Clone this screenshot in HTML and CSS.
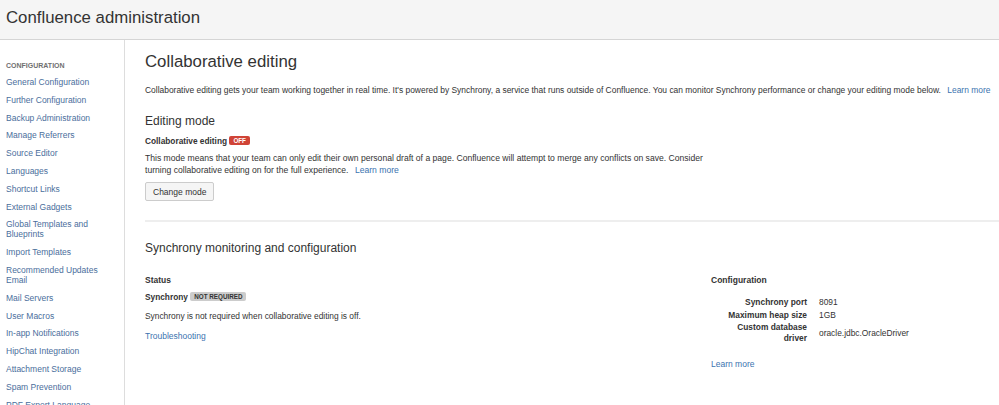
FILE: index.html
```html
<!DOCTYPE html>
<html lang="en">
<head>
  <meta charset="UTF-8">
  <meta name="viewport" content="width=device-width, initial-scale=1.0">
  <title>Confluence administration</title>
  <link rel="stylesheet" href="styles.css">
</head>
<body>
  <!-- Page header -->
  <header class="page-header">
    <h1>Confluence administration</h1>
  </header>

  <div class="layout">
    <!-- Admin sidebar -->
    <nav class="sidebar">
      <div class="nav-heading">Configuration</div>
      <ul class="nav-list">
        <li><a href="#">General Configuration</a></li>
        <li><a href="#">Further Configuration</a></li>
        <li><a href="#">Backup Administration</a></li>
        <li><a href="#">Manage Referrers</a></li>
        <li><a href="#">Source Editor</a></li>
        <li><a href="#">Languages</a></li>
        <li><a href="#">Shortcut Links</a></li>
        <li><a href="#">External Gadgets</a></li>
        <li><a href="#">Global Templates and Blueprints</a></li>
        <li><a href="#">Import Templates</a></li>
        <li><a href="#">Recommended Updates Email</a></li>
        <li><a href="#">Mail Servers</a></li>
        <li><a href="#">User Macros</a></li>
        <li><a href="#">In-app Notifications</a></li>
        <li><a href="#">HipChat Integration</a></li>
        <li><a href="#">Attachment Storage</a></li>
        <li><a href="#">Spam Prevention</a></li>
        <li><a href="#">PDF Export Language Support</a></li>
      </ul>
    </nav>

    <!-- Main content -->
    <main class="content">
      <h2 class="page-title">Collaborative editing</h2>
      <p class="intro">Collaborative editing gets your team working together in real time. It's powered by Synchrony, a service that runs outside of Confluence. You can monitor Synchrony performance or change your editing mode below. <a href="#" class="more">Learn more</a></p>

      <section class="editing-mode">
        <h3>Editing mode</h3>
        <div class="label-row"><strong>Collaborative editing</strong> <span class="lozenge off">Off</span></div>
        <p class="desc">This mode means that your team can only edit their own personal draft of a page. Confluence will attempt to merge any conflicts on save. Consider turning collaborative editing on for the full experience. <a href="#" class="more">Learn more</a></p>
        <button class="btn">Change mode</button>
      </section>

      <section class="synchrony">
        <h3>Synchrony monitoring and configuration</h3>
        <div class="columns">
          <div class="status">
            <h4>Status</h4>
            <div class="label-row"><strong>Synchrony</strong> <span class="lozenge grey">Not required</span></div>
            <p>Synchrony is not required when collaborative editing is off.</p>
            <a href="#">Troubleshooting</a>
          </div>
          <div class="config">
            <h4>Configuration</h4>
            <table class="config-table">
              <tr><th>Synchrony port</th><td>8091</td></tr>
              <tr><th>Maximum heap size</th><td>1GB</td></tr>
              <tr><th>Custom database driver</th><td>oracle.jdbc.OracleDriver</td></tr>
            </table>
            <a href="#">Learn more</a>
          </div>
        </div>
      </section>
    </main>
  </div>
</body>
</html>
```

FILE: styles.css
```css
body {
  font-family: 'Liberation Sans', Arial, sans-serif;
  font-size: 8.5px;
  color: #333;
  margin: 0;
  background-color: #fff;
  overflow: hidden;
}

a {
  color: #3b73af;
  text-decoration: none;
}

a.more {
  margin-left: 4px;
}

/* Header */
.page-header {
  height: 40px;
  background-color: #f5f5f5;
  border-bottom: 1px solid #d5d5d5;
  box-sizing: border-box;
  padding: 0 6px;
  display: flex;
  align-items: center;
}

.page-header h1 {
  margin: 0 0 3px;
  font-size: 16.8px;
  font-weight: normal;
  color: #333;
}

.layout {
  display: flex;
  height: 365px;
}

/* Sidebar */
.sidebar {
  width: 125px;
  flex-shrink: 0;
  border-right: 1px solid #ddd;
  padding: 21px 6px 0;
  box-sizing: border-box;
}

.nav-heading {
  font-size: 7px;
  font-weight: bold;
  color: #707070;
  text-transform: uppercase;
  line-height: 9px;
  margin-bottom: 3px;
}

.nav-list {
  list-style: none;
  margin: 0;
  padding: 0;
}

.nav-list li {
  font-size: 8.5px;
  line-height: 10px;
  padding: 4px 0 3.8px;
}

.nav-list a {
  color: #4a6e9c;
}

/* Main content */
.content {
  flex: 1;
  padding: 10px 0 0 20px;
  min-width: 0;
}

.page-title {
  font-size: 16.8px;
  font-weight: normal;
  margin: 0;
  line-height: 24px;
}

.intro {
  margin: 10px 0 0;
  font-size: 8.45px;
  line-height: 13px;
  white-space: nowrap;
}

h3 {
  font-size: 12px;
  font-weight: normal;
  margin: 0;
  line-height: 18px;
}

.editing-mode {
  margin-top: 15px;
  padding-bottom: 19px;
  border-bottom: 2px solid #eee;
}

.label-row {
  margin-top: 5px;
  font-size: 8.3px;
  line-height: 13px;
}

.lozenge {
  display: inline-block;
  font-size: 6.3px;
  font-weight: bold;
  text-transform: uppercase;
  line-height: 9px;
  padding: 0 4px;
  border-radius: 2px;
  vertical-align: 1px;
}

.lozenge.off {
  background-color: #d04437;
  color: #fff;
}

.lozenge.grey {
  background-color: #ccc;
  color: #333;
}

.desc {
  margin: 4px 0 0;
  max-width: 565px;
  font-size: 8.6px;
  line-height: 12px;
}

.btn {
  display: block;
  margin-top: 6px;
  font-family: inherit;
  font-size: 8.5px;
  color: #333;
  background-color: #f5f5f5;
  border: 1px solid #ccc;
  border-radius: 2px;
  height: 19px;
  padding: 0 7px;
}

.synchrony {
  margin-top: 17px;
}

.columns {
  display: grid;
  grid-template-columns: 566px 1fr;
  margin-top: 17px;
}

h4 {
  margin: 0;
  font-size: 8.5px;
  font-weight: bold;
  line-height: 13px;
}

.status .label-row {
  margin-top: 4px;
}

.status p {
  margin: 6px 0 0;
  font-size: 8.4px;
  line-height: 13px;
}

.status a {
  display: inline-block;
  margin-top: 8px;
  font-size: 8.5px;
}

.config-table {
  margin-top: 9px;
  border-collapse: collapse;
  font-size: 8.4px;
}

.config-table th {
  width: 84px;
  text-align: right;
  font-weight: bold;
  padding: 0 12px;
  line-height: 11px;
  vertical-align: middle;
}

.config-table td {
  padding: 0;
  line-height: 13px;
  vertical-align: middle;
}

.config a {
  display: inline-block;
  margin-top: 15px;
  font-size: 8.5px;
}
```
